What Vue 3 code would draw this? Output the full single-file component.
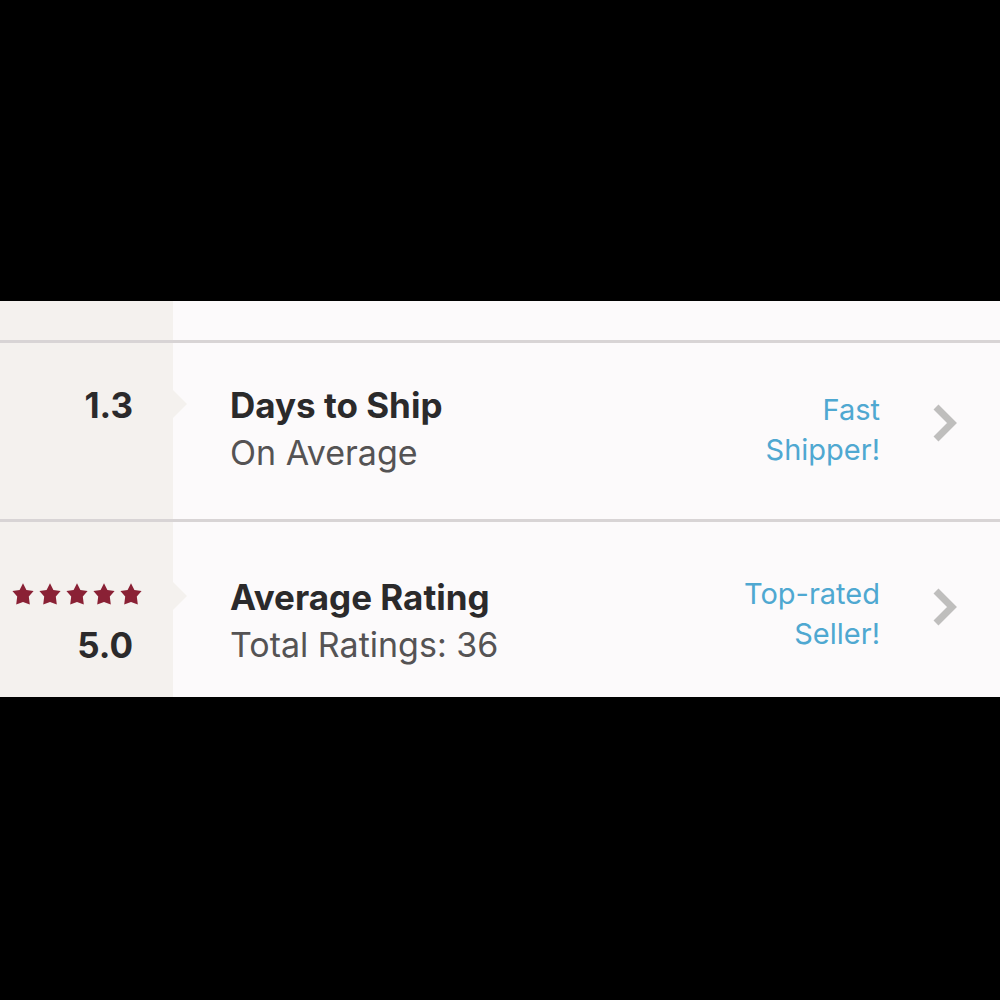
<template>
  <main class="screen">
    <section class="panel">
      <div class="row row-previous">
        <div class="stat"></div>
      </div>
      <a v-for="item in items" :key="item.title" class="row" :class="item.kind" href="#">
        <div class="stat">
          <div class="stat-value">
            <div v-if="item.stars" class="stars" role="img" :aria-label="`${item.stars} stars`">
              <svg v-for="n in item.stars" :key="n" class="star" viewBox="0 0 22 22">
                <path d="M11 0.3L14.4 6.9L21.6 8.1L16.8 13.5L17.8 21.4L11 18.9L4.2 21.4L5.2 13.5L0.4 8.1L7.6 6.9Z" />
              </svg>
            </div>
            <strong class="number">{{ item.value }}</strong>
          </div>
        </div>
        <div class="info">
          <strong class="title">{{ item.title }}</strong>
          <span class="subtitle">{{ item.subtitle }}</span>
        </div>
        <div class="badge">
          <span v-for="line in item.badge" :key="line">{{ line }}</span>
        </div>
        <svg class="chevron" viewBox="0 0 24 38">
          <path d="M3 3L19 19L3 35" />
        </svg>
      </a>
    </section>
  </main>
</template>

<script setup>
  const items = [
    {
      kind: 'row-shipping',
      value: '1.3',
      title: 'Days to Ship',
      subtitle: 'On Average',
      badge: ['Fast', 'Shipper!'],
    },
    {
      kind: 'row-rating',
      value: '5.0',
      stars: 5,
      title: 'Average Rating',
      subtitle: 'Total Ratings: 36',
      badge: ['Top-rated', 'Seller!'],
    },
  ];
</script>

<style>
  body {
    margin: 0;
    background: #000;
  }
</style>

<style scoped>
  .screen {
    display: flex;
    flex-direction: column;
    justify-content: center;
    box-sizing: border-box;
    padding-bottom: 2px;
    min-height: 100vh;
    font-family: Inter, Lato, sans-serif;
  }
  .panel {
    background: #FCFAFB;
  }

  .row {
    display: grid;
    grid-template-columns: 173px 1fr auto 24px;
    align-items: start;
    padding-right: 43px;
    color: #2B2A2B;
    text-decoration: none;
  }
  .row + .row {
    border-top: 3px solid #D8D4D5;
  }
  .row-previous {
    height: 39px;
  }

  .stat {
    position: relative;
    align-self: stretch;
    background: #F4F1EE;
  }
  .stat-value {
    display: flex;
    flex-direction: column;
    align-items: flex-end;
    padding-right: 40px;
  }
  .number,
  .title {
    line-height: 48px;
    font-size: 35px;
    font-weight: 700;
  }
  .stars {
    display: flex;
    align-items: flex-start;
    gap: 5px;
    box-sizing: border-box;
    padding-top: 10px;
    height: 48px;
    margin-right: -9px;
  }
  .star {
    width: 22px;
    height: 22px;
    fill: #8A2135;
  }

  .row-shipping .stat,
  .row-shipping .info {
    padding-top: 38px;
    padding-bottom: 42px;
  }
  .row-rating .stat,
  .row-rating .info {
    padding-top: 51px;
    padding-bottom: 28px;
  }

  /* pointer towards the description */
  .row-shipping .stat::after,
  .row-rating .stat::after {
    content: '';
    position: absolute;
    left: 100%;
    width: 14px;
    height: 28px;
    background: #F4F1EE;
    clip-path: polygon(0 0, 100% 50%, 0 100%);
  }
  .row-shipping .stat::after {
    top: 47px;
  }
  .row-rating .stat::after {
    top: 60px;
  }

  .info {
    display: flex;
    flex-direction: column;
    padding-left: 57px;
  }
  .subtitle {
    line-height: 48px;
    font-size: 34px;
    color: #555354;
  }

  .badge {
    display: flex;
    flex-direction: column;
    padding-right: 53px;
    line-height: 40px;
    font-size: 29px;
    text-align: right;
    color: #4FA8D1;
  }
  .chevron {
    width: 24px;
    height: 38px;
    fill: none;
    stroke: #BFBEBD;
    stroke-width: 7px;
  }
  .row-shipping .badge {
    padding-top: 47px;
  }
  .row-shipping .chevron {
    padding-top: 61px;
  }
  .row-rating .badge {
    padding-top: 52px;
  }
  .row-rating .chevron {
    padding-top: 66px;
  }
</style>
